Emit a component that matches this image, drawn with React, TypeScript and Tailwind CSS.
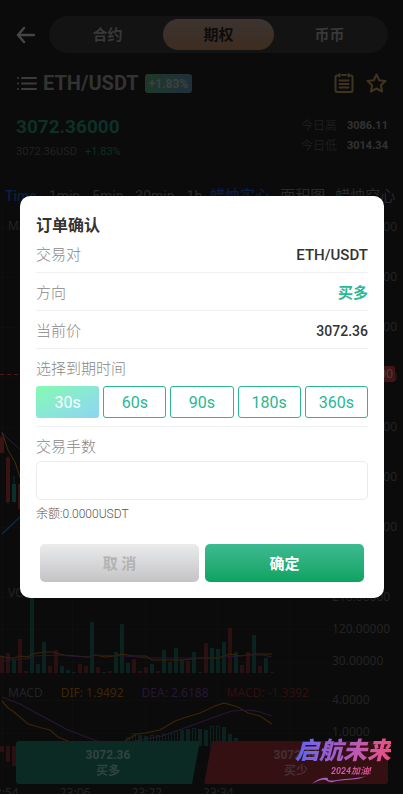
import React, { useState } from "react";

const MARKETS = ["合约", "期权", "币币"];
const INTERVALS = ["Time", "1min", "5min", "30min", "1h"];
const STYLES = ["蜡烛实心", "面积图", "蜡烛空心", "5日"];
const PERIODS = ["30s", "60s", "90s", "180s", "360s"];
const PRICE_AXIS = ["3090.00000", "3084.00000", "3078.00000", "3072.00000", "3066.00000", "3060.00000", "3054.00000"];

const RED = "#2b1011";
const GREEN = "#0a231e";
const ORANGE = "#3d2403";
const PURPLE = "#281733";

// One entry per candle: direction and bar height.
const VOLUME: [string, number][] = [
  ["r", 17], ["r", 20], ["g", 13], ["r", 34], ["r", 2], ["g", 90], ["g", 9], ["g", 31],
  ["r", 7], ["r", 23], ["g", 7], ["g", 3], ["g", 1], ["r", 9], ["r", 7], ["g", 51],
  ["r", 6], ["g", 1], ["r", 2], ["g", 21], ["g", 49], ["g", 10], ["r", 14], ["r", 2],
  ["r", 6], ["g", 9], ["r", 2], ["g", 23], ["g", 11], ["g", 25], ["g", 13], ["r", 12],
  ["g", 21], ["g", 1], ["r", 30], ["g", 25], ["g", 24], ["g", 31], ["r", 45], ["g", 21],
  ["r", 8], ["r", 21], ["g", 38], ["r", 7], ["g", 15], ["r", 1],
];

// MACD histogram: candle index, height above (+) or below (-) zero, hollow.
const MACD: [number, number, boolean][] = [
  [0, -6, false], [1, -16, false], [2, -20, false],
  [21, 9, true], [22, 13, true], [23, 11, false], [24, 10, false], [25, 11, true],
  [26, 11, true], [27, 12, true], [28, 13, true], [29, 15, true], [30, 16, false],
  [31, 17, false], [32, 18, true], [33, 17, false], [34, 16, false], [35, 20, true],
  [36, 20, true], [37, 19, false], [38, 12, false], [39, 8, false],
];

function Grid({ rows }: { rows: number[] }) {
  return (
    <g stroke="#0e0e0e">
      {[2, 72, 145, 217, 289].map((x) => (
        <line key={x} x1={x + 0.5} x2={x + 0.5} y1="0" y2="100%" />
      ))}
      {rows.map((y) => (
        <line key={y} x1="0" x2="100%" y1={y + 0.5} y2={y + 0.5} />
      ))}
    </g>
  );
}

function PriceChart() {
  return (
    <svg className="h-full min-w-0 flex-1" aria-hidden="true">
      <Grid rows={[19, 69, 119, 169, 219, 269, 319]} />
      <line x1="0" x2="100%" y1="166.5" y2="166.5" stroke="#521818" strokeDasharray="4 3" />
      <g fill="#3a1415">
        <path d="M1.500 225h1v4h1.500v16H0v-16h1.500z" />
        <path d="M7.500 248h1v2H10v44H8.500v2h-1v-2H6v-44h1.500z" />
        <rect x="18" y="276" width="4" height="25" />
      </g>
      <path d="M13.500 268h1v8H16v18h-4v-18h1.500z" fill="#0b302a" />
      <g fill="none" strokeWidth="1">
        <path d="M2 224L8 242L15 254L20 269L26 285" stroke="#4a2b04" />
        <path d="M2 224L8 231L20 241L28 247" stroke="#301b3d" />
        <path d="M2 326L20 309L28 302" stroke="#0b2b45" strokeWidth="1.500" />
      </g>
    </svg>
  );
}

function VolumeChart() {
  return (
    <svg className="h-full min-w-0 flex-1" aria-hidden="true">
      <Grid rows={[14, 46, 79]} />
      {VOLUME.map(([dir, h], i) => (
        <rect key={i} x={i * 6} y={90 - h} width="4" height={h} fill={dir === "r" ? RED : GREEN} />
      ))}
      <g fill="none" strokeWidth="1.200">
        <polyline stroke={ORANGE} points="0,73 8,75 14,75 20,73 28,74 32,71 44,69 52,69 64,72 76,73 88,74 95,72 105,74 114,73 122,71 134,73 146,73 152,77 184,77 200,75 218,75 230,71 240,73 256,71 272,71" />
        <polyline stroke={PURPLE} points="2,78 20,76 28,76 34,73 60,72 70,73 88,74 95,72 125,73 150,75 200,75 225,74 250,72 262,72 272,74" />
      </g>
    </svg>
  );
}

function MacdChart() {
  return (
    <svg className="h-full min-w-0 flex-1" aria-hidden="true">
      <Grid rows={[16, 49, 82]} />
      {MACD.map(([i, v, hollow]) => (
        <rect
          key={i}
          x={i * 6 + (hollow ? 0.5 : 0)}
          y={(v > 0 ? 62 - v : 62) + (hollow ? 0.5 : 0)}
          width={hollow ? 3 : 4}
          height={Math.abs(v)}
          fill={hollow ? "none" : v > 0 ? GREEN : RED}
          stroke={hollow ? GREEN : "none"}
        />
      ))}
      <g fill="none" strokeWidth="1.200">
        <polyline stroke={ORANGE} points="2,17 8,24 14,28 28,40 42,44 50,46 58,53 68,57 90,66 110,64 125,57 137,50 145,49 160,46 175,37 190,32 200,29 215,22 224,19 238,23 248,29 260,32 272,40" />
        <polyline stroke={PURPLE} points="2,13 20,20 40,31 68,46 97,57 115,60 136,57 162,52 190,42 204,37 220,31 232,27 250,26 260,28 272,32" />
      </g>
    </svg>
  );
}

function Field({ label, children }: { label: string; children: React.ReactNode }) {
  return (
    <div className="flex h-[38px] items-center justify-between border-b border-[#f0f0f0] pt-[3px]">
      <dt className="font-light text-[#888]">{label}</dt>
      <dd>{children}</dd>
    </div>
  );
}

function OrderDialog() {
  const [period, setPeriod] = useState("30s");
  const [lots, setLots] = useState("");
  return (
    <div className="fixed inset-x-0 top-0 bottom-px flex items-center pr-[19px] pl-5">
      <form
        role="dialog"
        aria-labelledby="order-title"
        onSubmit={(e) => e.preventDefault()}
        className="w-full rounded-[10px] bg-white p-4 text-[15px] text-[#333]"
      >
        <h2 id="order-title" className="h-[23px] text-base leading-7 font-bold">订单确认</h2>
        <dl>
          <Field label="交易对"><span className="font-medium">ETH/USDT</span></Field>
          <Field label="方向"><span className="font-bold text-[#2bb793]">买多</span></Field>
          <Field label="当前价"><span className="text-sm font-medium">3072.36</span></Field>
        </dl>
        <fieldset className="border-b border-[#f0f0f0] pb-2">
          <legend className="h-[37px] leading-10 font-light text-[#888]">选择到期时间</legend>
          <div className="grid grid-cols-5 gap-1">
            {PERIODS.map((p) => (
              <button
                key={p}
                type="button"
                aria-pressed={p === period}
                onClick={() => setPeriod(p)}
                className={
                  p === period
                    ? "h-8 rounded-[3px] bg-linear-to-br from-[#84fab0] to-[#8fd3f4] pt-0.5 text-base text-white"
                    : "h-8 rounded-[3px] border border-[#2bb793] pt-0.5 text-base text-[#2bb793]"
                }
              >
                {p}
              </button>
            ))}
          </div>
        </fieldset>
        <label htmlFor="lots" className="block h-[34px] leading-10 font-light text-[#888]">交易手数</label>
        <input
          id="lots"
          value={lots}
          onChange={(e) => setLots(e.target.value)}
          className="block h-[39px] w-full rounded-[5px] border border-[#ebebeb] px-3 outline-none"
        />
        <p className="mt-1 h-5 text-xs leading-5 font-light text-[#555]">余额:0.0000USDT</p>
        <div className="mt-5 grid grid-cols-2 gap-1.5 px-1 font-bold">
          <button type="button" className="h-[38px] rounded-[5px] bg-linear-to-b from-[#ebebec] to-[#c3c4c6] pt-0.5 text-[#b3b3b3]">取 消</button>
          <button type="submit" className="h-[38px] rounded-[5px] bg-linear-to-b from-[#3cba92] to-[#0ba360] pt-0.5 text-white">确定</button>
        </div>
      </form>
    </div>
  );
}

function Banner() {
  return (
    <div className="fixed right-3 bottom-2.5 h-[52px] w-24">
      <p className="bg-linear-to-r from-[#5b63f5] via-[#a95bc4] to-[#ef4b80] bg-clip-text text-2xl leading-9 font-black whitespace-nowrap text-transparent italic">
        启航未来
      </p>
      <p className="-mt-1 bg-linear-to-r from-[#a95bc4] to-[#ef4b80] bg-clip-text pl-9 text-[9px] leading-3 font-bold whitespace-nowrap text-transparent italic">
        2024加油!
      </p>
      <svg viewBox="0 0 96 52" className="absolute inset-0" fill="none" aria-hidden="true">
        <path d="M17 51C21 47 27 44 33 45C32 48 36 48 42 47C52 45 62 46 71 43C63 48 48 46 38 49C33 50 32 47 30 47C25 46 21 49 17 51Z" fill="#a65ac0" />
      </svg>
    </div>
  );
}

export default function App() {
  return (
    <main className="relative flex h-[calc(100vh-1px)] flex-col overflow-hidden bg-[#0b0b0b] font-[Roboto,'Noto_Sans_CJK_SC',sans-serif] text-[#333]">
      <header className="flex h-[69px] shrink-0 items-center gap-3.5 pr-[15px] pl-4">
        <button aria-label="返回" className="text-[#454545]">
          <svg width="19" height="18" viewBox="0 0 19 18" fill="none" stroke="currentColor" strokeWidth="2.500" strokeLinecap="round" strokeLinejoin="round">
            <path d="M8 2L2 9L8 16M2 9H18" />
          </svg>
        </button>
        <nav className="grid h-[37px] flex-1 grid-cols-3 rounded-full bg-[#131313] p-[3px] text-[15px] font-bold">
          {MARKETS.map((m) => (
            <button
              key={m}
              className={m === "期权" ? "rounded-full bg-linear-to-b from-[#3c3430] to-[#3d2c20] pt-0.5 text-[#0e0c0b]" : "pt-0.5 text-[#383838]"}
            >
              {m}
            </button>
          ))}
        </nav>
      </header>

      <section className="flex h-7 shrink-0 items-center pr-4 pl-4">
        <button aria-label="交易对列表" className="text-[#3b3b3b]">
          <svg width="21" height="15" viewBox="0 0 21 15" fill="none" stroke="currentColor" strokeWidth="2" strokeLinecap="round">
            <path d="M6 2H20M6 7.500H20M6 13H20M2 2h.1M2 7.500h.1M2 13h.1" />
          </svg>
        </button>
        <h1 className="ml-1.5 text-xl font-bold">ETH/USDT</h1>
        <span className="ml-1.5 h-[19px] rounded-[3px] bg-linear-to-r from-[#1e3929] to-[#20303a] px-1 text-xs leading-5 font-bold text-[#3a4341]">+1.83%</span>
        <div className="ml-auto flex items-center gap-3 text-[#41341f]">
          <button aria-label="订单记录">
            <svg width="20" height="20" viewBox="0 0 20 20" fill="none" stroke="currentColor" strokeWidth="2" strokeLinecap="round">
              <path d="M4 2.500H2.800Q1.500 2.500 1.500 4V17.500Q1.500 19 3 19H17Q18.500 19 18.500 17.500V4Q18.500 2.500 17.200 2.500H16M8 2H12M5.500 1V3.500M14.500 1V3.500M5.500 7.500H14.500M5.500 11H14.500M5.500 14.500H14.500" />
            </svg>
          </button>
          <button aria-label="收藏">
            <svg width="21" height="20" viewBox="0 0 21 20" fill="none" stroke="currentColor" strokeWidth="2" strokeLinejoin="round">
              <path d="M10.500 1.500L13.200 7.200L19.500 8L14.900 12.300L16.100 18.500L10.500 15.500L4.900 18.500L6.100 12.300L1.500 8L7.800 7.200Z" />
            </svg>
          </button>
        </div>
      </section>

      <section className="mt-[17px] flex h-12 shrink-0 justify-between pr-[15px] pl-4">
        <div>
          <p className="text-[19px] leading-[26px] font-bold text-[#0d3027]">3072.36000</p>
          <p className="mt-0.5 flex gap-2 text-[11px] leading-5 text-[#222]">
            <span>3072.36USD</span>
            <span className="text-[#0d2f25]">+1.83%</span>
          </p>
        </div>
        <dl className="grid grid-cols-[auto_auto] content-start gap-x-2.5 pt-0.5 text-xs leading-5">
          <dt className="text-[#1d1d1d]">今日高</dt>
          <dd className="text-right text-[11px] font-bold">3086.11</dd>
          <dt className="text-[#1d1d1d]">今日低</dt>
          <dd className="text-right text-[11px] font-bold">3014.34</dd>
        </dl>
      </section>

      <nav className="mt-[22px] flex h-6 shrink-0 items-center overflow-hidden pl-[5px] text-[15px] whitespace-nowrap text-[#2a2a2a]">
        <div className="flex shrink-0 gap-3 text-sm">
          {INTERVALS.map((t) => (
            <button key={t} className={t === "Time" ? "font-medium text-[#0a1f45]" : ""}>{t}</button>
          ))}
        </div>
        <div className="ml-2 flex shrink-0 gap-2.5">
          {STYLES.map((t) => (
            <button key={t} className={t === "蜡烛实心" ? "font-medium text-[#0a1f45]" : ""}>{t}</button>
          ))}
        </div>
      </nav>

      <section className="flex shrink-0 flex-col font-['Noto_Sans',sans-serif] text-xs text-[#232325]">
        <div className="relative flex h-[375px]">
          <p className="absolute top-2.5 left-2 leading-4">MA</p>
          <PriceChart />
          <div className="flex w-[71px] flex-col gap-[30px] pt-[9px] leading-5">
            {PRICE_AXIS.map((v) => <span key={v}>{v}</span>)}
          </div>
          <span className="absolute top-[158px] right-2 rounded-xs bg-[#421616] px-0.5 leading-4 text-[#484040]">3072.36000</span>
        </div>
        <div className="relative flex h-[101px]">
          <p className="absolute top-0.5 left-2 leading-4">VOL</p>
          <VolumeChart />
          <div className="flex w-[71px] flex-col gap-4 pt-1.5 leading-4">
            <span>210.00000</span>
            <span>120.00000</span>
            <span>30.00000</span>
          </div>
        </div>
        <div className="relative flex h-[99px]">
          <p className="absolute top-0 left-2 flex gap-[18px] leading-[18px] whitespace-nowrap">
            <span>MACD</span>
            <span className="text-[#402604]">DIF: 1.9492</span>
            <span className="text-[#281733]">DEA: 2.6188</span>
            <span className="text-[#301011]">MACD: -1.3392</span>
          </p>
          <MacdChart />
          <div className="flex w-[71px] flex-col gap-4 pt-2 leading-4">
            <span>4.0000</span>
            <span>1.0000</span>
          </div>
        </div>
        <div className="-ml-3 flex h-5 gap-[41px] leading-5">
          <span>22:54</span>
          <span>23:06</span>
          <span>23:22</span>
          <span>23:34</span>
        </div>
      </section>

      <div className="absolute inset-x-0 bottom-2.5 grid grid-cols-2 gap-1 pr-[15px] pl-4 text-xs leading-4 font-bold text-[#2f4440]">
        <button className="h-[43px] rounded-[3px] bg-[#0b2a24] [clip-path:polygon(0_0,100%_0,calc(100%-8px)_100%,0_100%)]">
          <span className="block">3072.36</span>
          <span className="block">买多</span>
        </button>
        <button className="h-[43px] rounded-[3px] bg-[#351013] text-[#433033] [clip-path:polygon(8px_0,100%_0,100%_100%,0_100%)]">
          <span className="block">3072.36</span>
          <span className="block">买少</span>
        </button>
      </div>

      <OrderDialog />
      <Banner />
    </main>
  );
}
